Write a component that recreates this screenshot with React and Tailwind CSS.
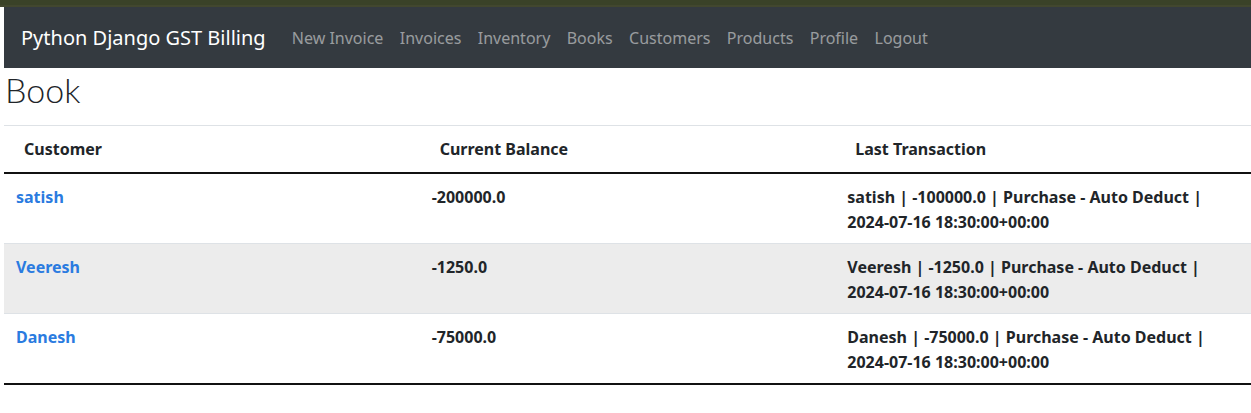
import React from "react";

const links = ["New Invoice", "Invoices", "Inventory", "Books", "Customers", "Products", "Profile", "Logout"];

const rows = [
  { name: "satish", balance: "-200000.0", last: "satish | -100000.0 | Purchase - Auto Deduct | 2024-07-16 18:30:00+00:00" },
  { name: "Veeresh", balance: "-1250.0", last: "Veeresh | -1250.0 | Purchase - Auto Deduct | 2024-07-16 18:30:00+00:00" },
  { name: "Danesh", balance: "-75000.0", last: "Danesh | -75000.0 | Purchase - Auto Deduct | 2024-07-16 18:30:00+00:00" },
];

export default function App() {
  return (
    <div className="w-[1251px] h-[413px] bg-white font-['Noto_Sans',sans-serif] text-[#212529] overflow-hidden">
      <div className="h-[5px] bg-[#3a4228]" />
      <div className="h-[2px] bg-[#42472f]" />
      <div className="ml-[4px]">
        <nav className="h-[61px] bg-[#343a40] flex items-center px-4">
          <a className="text-white text-[20px] ml-[1px] mr-[18px]">Python Django GST Billing</a>
          <div className="flex items-center">
            {links.map((l) => (
              <a key={l} className="text-[16px] text-white/50 px-[8.2px]">{l}</a>
            ))}
          </div>
        </nav>
        <h2 className="font-['Lato',sans-serif] text-[34px] font-light leading-[44px] mt-0 mb-[13px] ml-[1px]">Book</h2>
        <table className="w-full table-fixed border-collapse text-[16px] font-bold">
          <thead>
            <tr className="border-t border-[#dee2e6] border-b-2 border-b-[#111]">
              <th className="text-left pl-5 pt-[11px] pb-[10px] leading-[25px]">Customer</th>
              <th className="text-left pl-5 pt-[11px] pb-[10px] leading-[25px]">Current Balance</th>
              <th className="text-left pl-5 pt-[11px] pb-[10px] leading-[25px]">Last Transaction</th>
            </tr>
          </thead>
          <tbody>
            {rows.map((r, i) => (
              <tr key={r.name} className={`${i % 2 === 1 ? "bg-[#ececec]" : "bg-white"} ${i === rows.length - 1 ? "border-b-2 border-b-[#111]" : "border-b border-[#dee2e6]"}`}>
                <td className="align-top px-3 pt-[11px] pb-[8px] leading-[25px]">
                  <a className="text-[#2a7be0]">{r.name}</a>
                </td>
                <td className="align-top px-3 pt-[11px] pb-[8px] leading-[25px]">{r.balance}</td>
                <td className="align-top px-3 pt-[11px] pb-[8px] leading-[25px] pr-10">{r.last}</td>
              </tr>
            ))}
          </tbody>
        </table>
      </div>
    </div>
  );
}
